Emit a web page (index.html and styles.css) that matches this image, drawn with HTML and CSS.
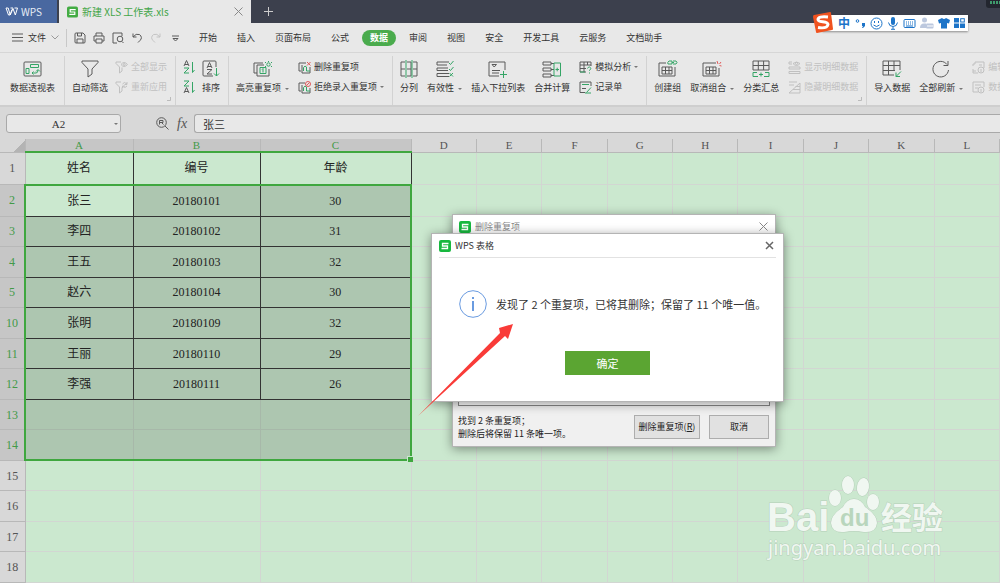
FILE: index.html
```
<!DOCTYPE html>
<html lang="zh-CN">
<head>
    <meta charset="UTF-8">
    <meta name="viewport" content="width=device-width, initial-scale=1.0">
    <title>新建 XLS 工作表.xls - WPS</title>
    <link rel="stylesheet" href="styles.css">
</head>
<body>

    <header class="tab-bar">
        <button class="wps-home">
            <svg width="13" height="10" viewBox="0 0 13 10"><path d="M1 1h2.200l2 7L8 1.500l2.300 6.500L12.500 1H9.500M1 1l2.500 7h1.500L7 2.500M5.500 1H8" /></svg>
            WPS
        </button>
        <div class="doc-tab">
            <svg class="s-logo" width="11" height="12" viewBox="0 0 12 12"><rect width="12" height="12" rx="2" /><path d="M9.500 3.500h-6v2.500h5v2.500h-6" /></svg>
            <span>新建 XLS 工作表.xls</span>
            <button class="close" aria-label="关闭"><svg width="9" height="9" viewBox="0 0 9 9"><path d="M.5.5l8 8M8.500.5l-8 8" /></svg></button>
        </div>
        <button class="new-tab" aria-label="新建"><svg width="9" height="9" viewBox="0 0 9 9"><path d="M4.500 0v9M0 4.500h9" /></svg></button>
        <svg class="gauge" width="14" height="8" viewBox="0 0 14 8"><path class="box" d="M0 0h14v8H3Q0 8 0 5z" /><path d="M4 1h2v3H4zM7 1h2v3H7zM10 1h2v3h-2zM13 1h1v3h-1z" /></svg>
    </header>

    <nav class="menu-bar">
        <button class="file-menu">
            <svg class="ic" width="11" height="9" viewBox="0 0 11 9"><path d="M0 1h11M0 4.500h11M0 8h11" /></svg>
            文件
            <svg class="ic pale" width="8" height="5" viewBox="0 0 8 5"><path d="M.5.5L4 4 7.500.5" /></svg>
        </button>
        <div class="quick">
            <button aria-label="保存"><svg class="ic" width="12" height="12" viewBox="0 0 12 12"><path d="M1 2q0-1 1-1h7l2 2v7q0 1-1 1H2q-1 0-1-1zM3.500 1v3h4V1M3 11V7h6v4" /></svg></button>
            <button aria-label="打印"><svg class="ic" width="12" height="12" viewBox="0 0 12 12"><path d="M3 4V1h6v3M3 9H1V4h10v5H9M3 7h6v4H3z" /></svg></button>
            <button aria-label="打印预览"><svg class="ic" width="12" height="12" viewBox="0 0 12 12"><path d="M5 11H1V1h9v3M10 9.500l1.500 1.500" /><circle cx="8" cy="7" r="2.800" /></svg></button>
            <button aria-label="撤销"><svg class="ic" width="12" height="12" viewBox="0 0 12 12"><path d="M2 1.500v3.500h3.500M2 5q3-4 6.500-2.500Q12 5.500 9 8.500L7 10.500" /></svg></button>
            <button aria-label="恢复"><svg class="ic faint" width="12" height="12" viewBox="0 0 12 12"><path d="M10 1.500v3.500H6.500M10 5Q7 1 3.500 2.500 0 5.500 3 8.500l2 2" /></svg></button>
            <button aria-label="更多"><svg class="ic" width="12" height="12" viewBox="0 0 12 12"><path d="M3 4h7M4 6.500h5L6.500 9z" /></svg></button>
        </div>
        <div class="menus">
            <button>开始</button>
            <button>插入</button>
            <button>页面布局</button>
            <button>公式</button>
            <button class="active">数据</button>
            <button>审阅</button>
            <button>视图</button>
            <button>安全</button>
            <button>开发工具</button>
            <button>云服务</button>
            <button>文档助手</button>
        </div>
    </nav>

    <div class="ribbon">
        <div class="group">
            <button class="tool">
                <svg class="ic" width="20" height="18" viewBox="0 0 20 18"><rect x="1" y="2" width="17" height="14" rx="1" /><path class="g" d="M7.500 4.500h8v3h-8zM3 8.500h3v5H3zM9 13h4q2 0 2-3M13 11.500l2-2 2 2M10.500 11.500L9 13l1.500 1.500" /></svg>
                <span>数据透视表</span>
            </button>
        </div>
        <div class="group filter">
            <button class="tool">
                <svg class="ic" width="20" height="18" viewBox="0 0 20 18"><path d="M2 1h16v1.500L12 9v5l-4 3V9L2 2.500z" /></svg>
                <span>自动筛选</span>
            </button>
            <div class="stack">
                <button class="mini" disabled><svg class="ic" width="13" height="13" viewBox="0 0 13 13"><path d="M6 1H1v1.500L4.500 6v6L7 10V6.500M6 3.500q3-4 6.500 0-3.500 4-6.500 0" /><circle cx="9.200" cy="3.500" r="1" /></svg>全部显示</button>
                <button class="mini" disabled><svg class="ic" width="13" height="13" viewBox="0 0 13 13"><path d="M6 1H1v1.500L4.500 6v6L7 10V6.500M12 1v2.500H9.500M12 3Q9 0 7.500 3M7.500 7V5H10M7.500 5.500q3 2 4.500-.5" /></svg>重新应用</button>
            </div>
            <svg class="launcher" width="4" height="4" viewBox="0 0 4 4"><path d="M3.500 0v3.500H0" /></svg>
        </div>
        <div class="group sort">
            <div class="stack">
                <button class="mini" aria-label="升序"><svg class="ic" width="12" height="14" viewBox="0 0 12 14"><path d="M1 6l2.500-5.500L6 6M2 4.500h3" /><path class="g" d="M1 8h5l-5 5h5M9.500 2v10.500L11.500 10" /></svg></button>
                <button class="mini" aria-label="降序"><svg class="ic" width="12" height="14" viewBox="0 0 12 14"><path d="M1 13l2.500-5.500L6 13M2 11.500h3" /><path class="g" d="M1 1h5L1 6h5M9.500 2v10.500L11.500 10" /></svg></button>
            </div>
            <button class="tool">
                <svg class="ic" width="18" height="18" viewBox="0 0 18 18"><path d="M11 16H2q-1 0-1-1V2q0-1 1-1h11q1 0 1 1v5M5 8l2.500-5.500L10 8M6 6.500h3M5 9.500h5L5 14h5" /><path class="g" d="M14.500 8v8M12 13.500l2.500 2.500 2.500-2.500" /></svg>
                <span>排序</span>
            </button>
        </div>
        <div class="group">
            <button class="tool">
                <svg class="ic" width="20" height="18" viewBox="0 0 20 18"><path d="M4 13H1V3h9M4 5h7M16 9v7H4V5" /><path class="g" d="M7 7.500h6v6H7zM10 8.500v4M9 9.500l1-1M15.500 1v1M12 2l1 1M19 2l-1 1M12 7l1-1M19 7l-1-1" /><circle class="g" cx="15.500" cy="4.500" r="1.700" /></svg>
                <span>高亮重复项<i class="arrow"></i></span>
            </button>
            <div class="stack">
                <button class="mini"><svg class="ic" width="13" height="13" viewBox="0 0 13 13"><path d="M8 2H1v8h2M12 6v6H4M4 4v8" /><path class="g" d="M5.500 10V6.500Q7 4 8.500 6v4H12" /><path class="r" d="M9 1l3.500 3.500M12.500 1L9 4.500" /></svg>删除重复项</button>
                <button class="mini"><svg class="ic" width="13" height="13" viewBox="0 0 13 13"><path d="M7 2H1v8h2M12 7v5H4M4 4v8" /><path class="g" d="M5.500 10V6.500Q7 4 8.500 6v4H12" /><circle class="r" cx="10" cy="3" r="2.500" /><path class="r" d="M8.500 4.500l3-3" /></svg>拒绝录入重复项<i class="arrow"></i></button>
            </div>
        </div>
        <div class="group">
            <button class="tool">
                <svg class="ic" width="18" height="18" viewBox="0 0 18 18"><path d="M5 2H1v14h4M7 2h4v14H7M13 2h4v14h-4M1 9h4M7 9h4M13 9h4" /><path class="g" d="M6 0v18M12 0v18" /></svg>
                <span>分列</span>
            </button>
            <button class="tool">
                <svg class="ic" width="18" height="18" viewBox="0 0 18 18"><path d="M13 2H1v3h10M12 8H1v2.500h11M13 13.500H1v3h12" /><path class="g" d="M13 3l1.500 1.500L17.500 1M13 9l1.500 1.500L17.500 7M13.500 13l3.500 3.500M17 13l-3.500 3.500" /></svg>
                <span>有效性<i class="arrow"></i></span>
            </button>
            <button class="tool">
                <svg class="ic" width="20" height="18" viewBox="0 0 20 18"><path d="M17 10V2H1v14h10M4 10.500h8M4 13h7M4 4.500h4.500L6.200 7z" /><path class="g" d="M15.500 11v7M12 14.500h7" /></svg>
                <span>插入下拉列表</span>
            </button>
            <button class="tool">
                <svg class="ic" width="20" height="18" viewBox="0 0 20 18"><path d="M1 2h8v3H1zM1 8h8v3H1zM1 14h8v3H1zM9 3.500h3M9 9.500h3M9 15.500h3" /><path class="g" d="M12 3h6.500v13H12zM13.500 9.500h3.500M15.200 7.700v3.600" /></svg>
                <span>合并计算</span>
            </button>
            <div class="stack">
                <button class="mini"><svg class="ic" width="13" height="13" viewBox="0 0 13 13"><path d="M7 11H1V1h11v4M1 4h11M1 7.500h6M5 1v10M8.500 1v3" /><path class="g" d="M8.500 7.500Q9 6 10.500 6q3 1 0 3.500v.5M10.500 11.500v1M1 11h5" /></svg>模拟分析<i class="arrow"></i></button>
                <button class="mini"><svg class="ic" width="13" height="13" viewBox="0 0 13 13"><path d="M6 11.500H1V1h11v4M3 7.500h4" /><path class="g" d="M3 3.500h7M7.500 11.500l4.500-5M6 12h6" /></svg>记录单</button>
            </div>
        </div>
        <div class="group">
            <button class="tool">
                <svg class="ic" width="20" height="18" viewBox="0 0 20 18"><path d="M8 3H1v13h16V7M4 7h10v7H4zM4 10.500h10M7.500 7v7M11 7v7" /><path class="g" d="M11 1h3v3h-4q-1-1.500 1-3M14 2.500h2M15 1h3q2 1.500 0 3h-3" /></svg>
                <span>创建组</span>
            </button>
            <button class="tool">
                <svg class="ic" width="20" height="18" viewBox="0 0 20 18"><path d="M14 3H1v13h16V8M4 7h10v7H4zM4 10.500h10M7.500 7v7M11 7v7" /><path class="r" d="M15 1l1 3M19 2l-1.500 2M17.500 5.500l2 .5" /></svg>
                <span>取消组合<i class="arrow"></i></span>
            </button>
            <button class="tool">
                <svg class="ic" width="20" height="18" viewBox="0 0 20 18"><path d="M2 1h16v9H2zM2 5.500h16M7.300 1v9M12.600 1v9" /><path class="g" d="M6 12.500H2v4h5M14 12.500h4v4h-5M8 14.500h4M10 12.500v4" /></svg>
                <span>分类汇总</span>
            </button>
            <div class="stack">
                <button class="mini" disabled><svg class="ic" width="13" height="13" viewBox="0 0 13 13"><path d="M4 1H1v2h3M1 6h11v2H1zM1 10.500h11v2H1zM5 2.500q3.500-3 7 0-3.500 4-7 0" /><circle cx="8.500" cy="2.500" r="1" /></svg>显示明细数据</button>
                <button class="mini" disabled><svg class="ic" width="13" height="13" viewBox="0 0 13 13"><path d="M1 1h8M1 4h5M1 12h11V2zM12 5.500H7.500M12 8.500H5" /></svg>隐藏明细数据</button>
            </div>
            <svg class="launcher" width="4" height="4" viewBox="0 0 4 4"><path d="M3.500 0v3.500H0" /></svg>
        </div>
        <div class="group">
            <button class="tool">
                <svg class="ic" width="20" height="18" viewBox="0 0 20 18"><path d="M12 15H1V1h17v9M1 5.500h17M1 10.500h12M6.500 1v14M12 1v9" /><path class="g" d="M19 11.500l-5 5M14 12.500v4h4" /></svg>
                <span>导入数据</span>
            </button>
            <button class="tool">
                <svg class="ic" width="20" height="18" viewBox="0 0 20 18"><path d="M17.500 10A7.800 7.800 0 1 1 16 4.500M17 1v4.500h-4.500" /></svg>
                <span>全部刷新<i class="arrow"></i></span>
            </button>
            <div class="stack">
                <button class="mini" disabled><svg class="ic" width="13" height="13" viewBox="0 0 13 13"><path d="M1 5V3h2V1h9v6M1 8v4h5M1 10h3" /><circle cx="9" cy="9" r="3" /><path d="M9 8v3M7 4h3" /></svg>编辑连接</button>
                <button class="mini" disabled><svg class="ic" width="13" height="13" viewBox="0 0 13 13"><path d="M6 11H1V1h11v5M3 4h6M3 7h3" /><circle cx="9" cy="9" r="3" /><path d="M9 8v3" /></svg>数据区域</button>
            </div>
        </div>
    </div>

    <div class="formula-bar">
        <div class="name-box">
            <input type="text" value="A2" aria-label="名称框">
            <i class="arrow"></i>
        </div>
        <svg class="ic" width="13" height="13" viewBox="0 0 13 13"><circle cx="5.500" cy="5.500" r="4.800" /><path d="M3.500 7.500v-4H7v2H3.500M5.500 5.500l2 2M9 9l3.500 3.500" /></svg>
        <span class="fx">fx</span>
        <input class="formula" type="text" value="张三" aria-label="编辑栏">
    </div>

    <main class="sheet">
        <table>
            <colgroup>
                <col class="col-num"><col class="col-a"><col class="col-b"><col class="col-c">
                <col><col><col><col><col><col><col><col><col>
            </colgroup>
            <thead>
                <tr>
                    <th class="corner"></th>
                    <th class="on">A</th><th class="on">B</th><th class="on">C</th>
                    <th>D</th><th>E</th><th>F</th><th>G</th><th>H</th><th>I</th><th>J</th><th>K</th><th>L</th>
                </tr>
            </thead>
            <tbody id="rows"></tbody>
        </table>
    </main>

    <section class="dialog remove-dialog">
        <div class="dialog-title">
            <svg class="s-logo" width="12" height="12" viewBox="0 0 12 12"><rect width="12" height="12" rx="2" /><path d="M9.500 3.500h-6v2.500h5v2.500h-6" /></svg>
            <span>删除重复项</span>
            <button class="close" aria-label="关闭"><svg width="9" height="9" viewBox="0 0 9 9"><path d="M.5.5l8 8M8.500.5l-8 8" /></svg></button>
        </div>
        <div class="column-list"></div>
        <div class="dialog-footer">
            <p>找到 2 条重复项；<br>删除后将保留 11 条唯一项。</p>
            <button>删除重复项(<u>R</u>)</button>
            <button>取消</button>
        </div>
    </section>

    <section class="dialog message-dialog">
        <div class="dialog-title">
            <svg class="s-logo" width="12" height="12" viewBox="0 0 12 12"><rect width="12" height="12" rx="2" /><path d="M9.500 3.500h-6v2.500h5v2.500h-6" /></svg>
            <span>WPS 表格</span>
            <button class="close" aria-label="关闭"><svg width="9" height="9" viewBox="0 0 9 9"><path d="M1 1l7 7M8 1L1 8" /></svg></button>
        </div>
        <div class="message">
            <svg class="info" width="28" height="28" viewBox="0 0 28 28"><circle cx="14" cy="14" r="13.300" /><path d="M14 7v2M14 11v10" /></svg>
            <p>发现了 2 个重复项，已将其删除；保留了 11 个唯一值。</p>
        </div>
        <button class="ok">确定</button>
    </section>

    <svg class="pointer" width="96" height="94" viewBox="0 0 96 94"><path d="M0 92L82 9 81 4 95 0 90 15 87 12z" /></svg>

    <div class="ime">
        <svg class="sogou" width="22" height="22" viewBox="0 0 22 22"><path class="tile" d="M2 3L18 0q1 0 1 1l2 16q0 1-1 1L5 21q-1 0-1-1L1 5q0-2 1-2z" /><path class="curve" d="M16 5Q6 4 6 7.500c0 3.500 10 1 10 5Q15 17 6 15.500" /></svg>
        <span>中</span>
        <svg width="12" height="12" viewBox="0 0 12 12"><circle class="line" cx="3.500" cy="4" r="1.300" /><path d="M8 6h3v3l-2 2H8l1-2H8z" /></svg>
        <svg width="13" height="13" viewBox="0 0 13 13"><circle class="line" cx="6.500" cy="6.500" r="5.500" /><path class="line" d="M4.500 4v2M8.500 4v2M3.500 8q3 3 6 0" /></svg>
        <svg width="12" height="13" viewBox="0 0 12 13"><rect x="4" y="0" width="4" height="8" rx="2" /><path class="line" d="M1.500 5.500Q2 9.500 6 9.500t4.500-4M6 10v2M4 12.300h4" /></svg>
        <svg width="13" height="11" viewBox="0 0 13 11"><rect class="line" x="1" y="1.500" width="11" height="8" rx="1" /><path class="line" d="M3 4h1M5 4h1M7 4h1M9 4h1M3 6h1M5 6h1M7 6h1M9 6h1M3 8h7" /></svg>
        <svg class="muted" width="14" height="13" viewBox="0 0 14 13"><circle cx="4.500" cy="3" r="2.500" /><path d="M0 11q0-4.500 4-4.500h2V11z" /><rect x="6" y="6.500" width="7.500" height="5" rx="1" /><path class="gap" d="M8 8v2M10 8v2M12 8v2" /></svg>
        <svg width="12" height="12" viewBox="0 0 12 12"><path d="M4 1q2 2 4 0l4 2-1 3.500-2-.5v5.500H3V6l-2 .5L0 3z" /></svg>
        <svg width="11" height="12" viewBox="0 0 11 12"><path d="M0 1h5v4.500H0zM0 6.500h5V11H0zM6 6.500h5V11H6z" /><rect class="line" x="6.700" y="1.700" width="3.600" height="3.300" /></svg>
    </div>

    <svg class="watermark" width="190" height="100" viewBox="0 0 190 100">
        <text class="bai" x="7" y="61">Bai</text>
        <ellipse cx="75" cy="28" rx="6" ry="8" />
        <ellipse cx="88" cy="15" rx="6" ry="9" />
        <ellipse cx="103" cy="17" rx="6" ry="9" transform="rotate(8 103 17)" />
        <ellipse cx="113" cy="32" rx="6" ry="8" />
        <path d="M94 29q7 0 11 8 12 8 12 16-1 10-13 9-10-2-20 0-12 1-13-9 0-8 12-16 4-8 11-8z" />
        <text class="du" x="80" y="56">du</text>
        <text class="jy" x="121" y="59">经验</text>
        <text class="url" x="8" y="85">jingyan.baidu.com</text>
    </svg>

    <script>
        const data = {
            1: ['姓名', '编号', '年龄'],
            2: ['张三', '20180101', '30'],
            3: ['李四', '20180102', '31'],
            4: ['王五', '20180103', '32'],
            5: ['赵六', '20180104', '30'],
            10: ['张明', '20180109', '32'],
            11: ['王丽', '20180110', '29'],
            12: ['李强', '20180111', '26']
        };
        // Rows 6-9 are hidden by the filter
        const visible = [1, 2, 3, 4, 5, 10, 11, 12, 13, 14, 15, 16, 17, 18];
        const tbody = document.getElementById('rows');

        visible.forEach(num => {
            const row = document.createElement('tr');
            const values = data[num] || ['', '', ''];
            const selected = num >= 2 && num <= 14;

            if (data[num]) row.classList.add('filled');
            if (selected) row.classList.add('selected');
            if (num === 1) row.classList.add('first');
            if (num === 2) row.classList.add('top');
            if (num === 14) row.classList.add('bottom');

            row.innerHTML = `<th>${num}</th>`
                + values.map(value => `<td class="cell">${value}</td>`).join('')
                + '<td></td>'.repeat(9);
            tbody.appendChild(row);
        });
    </script>

</body>
</html>
```

FILE: styles.css
```
* {
    box-sizing: border-box;
}
body {
    margin: 0;
    height: 100vh;
    display: flex;
    flex-direction: column;
    position: relative;
    overflow: hidden;
    background-color: #d8d8d8;
    color: #333;
    font-family: "Noto Sans CJK SC", sans-serif;
    font-size: 9px;
    line-height: 12px;
}
button {
    margin: 0;
    padding: 0;
    border: 0;
    background: none;
    color: inherit;
    font: inherit;
    white-space: nowrap;
    cursor: pointer;
}
input {
    font: inherit;
    color: inherit;
    outline: none;
}
svg {
    display: block;
    flex: none;
    fill: none;
}
p {
    margin: 0;
}

/* Icons */
.ic {
    stroke: #5a5a5a;
}
.ic .g {
    stroke: #35a566;
}
.ic .r {
    stroke: #e05a5a;
}
.ic.pale {
    stroke: #999;
}
.ic.faint {
    stroke: #c4c4c4;
}
.arrow {
    border: 2px solid transparent;
    border-top-color: #777;
    border-bottom: 0;
    display: inline-block;
    margin-left: 4px;
    vertical-align: middle;
}
.s-logo rect {
    fill: #18b83f;
}
.s-logo path {
    stroke: #fff;
    stroke-width: 1.3;
}
.close {
    margin-left: auto;
}
.close svg {
    stroke: #888;
}

/* Title tabs */
.tab-bar {
    display: flex;
    height: 23px;
    background-color: #3c404d;
}
.wps-home {
    display: flex;
    align-items: center;
    gap: 3px;
    width: 57px;
    padding-left: 5px;
    margin-right: 2px;
    background-color: #4968a0;
    color: #e6ecf5;
    font-size: 10px;
}
.wps-home svg {
    stroke: #fff;
}
.doc-tab {
    display: flex;
    align-items: center;
    gap: 4px;
    width: 192px;
    padding: 0 8px;
    background-color: #e8e8e8;
    color: #43a547;
    font-size: 10px;
}
.doc-tab .s-logo rect {
    fill: #43ac43;
}
.new-tab {
    padding: 0 13px;
}
.new-tab svg {
    stroke: #ccc;
}
.gauge {
    margin-left: auto;
    fill: #3f9a6c;
}
.gauge .box {
    fill: #23262f;
}

/* Menu */
.menu-bar {
    display: flex;
    align-items: center;
    height: 30px;
    background-color: #e8e8e8;
    border-bottom: 1px solid #d6d6d6;
}
.file-menu {
    display: flex;
    align-items: center;
    gap: 5px;
    height: 18px;
    padding: 0 7px 0 12px;
    border-right: 1px solid #c8c8c8;
}
.quick {
    display: flex;
    gap: 7px;
    padding: 0 18px 0 7px;
}
.menus {
    display: flex;
    align-items: center;
    gap: 20px;
}
.menus .active {
    height: 16px;
    padding: 0 8px;
    margin: 0 -7px;
    border-radius: 8px;
    background-color: #4aab4d;
    color: #fff;
    font-weight: bold;
}

/* Ribbon */
.ribbon {
    display: flex;
    height: 52px;
    padding-top: 3px;
    background-color: #e8e8e8;
    overflow: hidden;
}
.group {
    position: relative;
    display: flex;
    flex: none;
    align-items: flex-start;
    gap: 9px;
    padding: 4px 8px 0 7px;
    border-right: 1px solid #d2d2d2;
}
.group:first-child {
    padding: 4px 9px 0 10px;
}
.group:last-child {
    border-right: 0;
}
.group.filter,
.group.sort {
    gap: 7px;
}
.tool {
    display: flex;
    flex-direction: column;
    align-items: center;
    gap: 4px;
}
.stack {
    display: flex;
    flex-direction: column;
    gap: 6px;
}
.mini {
    display: flex;
    align-items: center;
    gap: 3px;
    height: 14px;
}
.mini .arrow {
    margin-left: 0;
}
.mini:disabled {
    color: #c0c0c0;
}
.mini:disabled .ic {
    stroke: #c0c0c0;
}
.launcher {
    position: absolute;
    right: 4px;
    bottom: 4px;
    stroke: #bbb;
}

/* Formula bar */
.formula-bar {
    display: flex;
    align-items: center;
    height: 34px;
    padding: 1px 0 0 6px;
    background-color: #d8d8d8;
    border-top: 2px solid #cecece;
}
.name-box {
    display: flex;
    align-items: center;
    width: 115px;
    height: 19px;
    margin-right: 35px;
    padding-right: 2px;
    border: 1px solid #a9a9a9;
    border-radius: 3px;
    background-color: #e8e8e8;
}
.name-box input {
    flex: 1;
    min-width: 0;
    padding: 0;
    border: 0;
    background: none;
    text-align: center;
    font-family: "Liberation Serif", serif;
    font-size: 11px;
}
.fx {
    padding: 0 7px 0 8px;
    font: italic 14px/16px "Liberation Serif", serif;
    color: #555;
}
.formula {
    flex: 1;
    height: 19px;
    padding: 0 8px;
    border: 1px solid #a9a9a9;
    border-right: 0;
    border-radius: 3px 0 0 3px;
    background-color: #e8e8e8;
    font-size: 11px;
}

/* Sheet */
.sheet {
    flex: 1;
    min-height: 0;
}
table {
    width: 100%;
    height: 100%;
    table-layout: fixed;
    border-collapse: collapse;
    background-color: #cbe8cf;
    font-family: "Liberation Serif", "Noto Sans CJK SC", serif;
    font-size: 12px;
    line-height: 14px;
    text-align: center;
}
th, td {
    padding: 0;
    border: 1px solid #d2d6d2;
}
th {
    background-color: #d8d8d8;
    border-color: #b8b8b8;
    color: #555;
    font-weight: normal;
}
thead th {
    height: 13px;
    border-top: 0;
    font-size: 11px;
    line-height: 12px;
}
.col-num {
    width: 25px;
}
.col-a {
    width: 108px;
}
.col-b {
    width: 127px;
}
.col-c {
    width: 151px;
}
.corner {
    border-left: 0;
    background: linear-gradient(135deg, #d8d8d8 70%, #b4b4b4 70%);
}
tbody th {
    border-left: 0;
}
th.on,
.selected th {
    background-color: #c6c6c6;
    color: #439a48;
}
.filled .cell {
    border: 1px solid #333;
    color: #222;
}
.selected .cell {
    background-color: #adc6b0;
}
.selected:not(.filled) .cell {
    border-color: #a7b8a9;
}
.first .cell {
    border-top: 2px solid #3fa73f;
}
.top .cell {
    border-top: 2px solid #3fa73f;
}
.top .cell:nth-child(2) {
    background-color: #cbe8cf;
}
.selected .cell:nth-child(2) {
    border-left: 2px solid #3fa73f;
}
.selected .cell:nth-child(4) {
    border-right: 2px solid #3fa73f;
}
.selected.bottom .cell.cell {
    border-bottom: 2px solid #3fa73f;
}
.bottom .cell:nth-child(4) {
    position: relative;
}
/* fill handle */
.bottom .cell:nth-child(4)::after {
    content: "";
    position: absolute;
    right: -3px;
    bottom: -3px;
    width: 5px;
    height: 5px;
    border: 1px solid #cbe8cf;
    border-width: 1px 0 0 1px;
    background-color: #3fa73f;
}

/* Dialogs */
.dialog {
    position: absolute;
    display: flex;
    flex-direction: column;
    border: 1px solid #b4b4b4;
    box-shadow: 0 2px 10px rgba(0, 0, 0, 0.4);
}
.dialog-title {
    display: flex;
    align-items: center;
    gap: 4px;
    height: 23px;
}
.remove-dialog {
    left: 452px;
    top: 214px;
    width: 324px;
    background-color: #f0f0f0;
    color: #222;
}
.remove-dialog .dialog-title {
    padding: 0 7px 0 6px;
    background-color: #fff;
    color: #888;
}
.column-list {
    height: 168px;
    margin: 0 5px;
    border: 1px solid #888;
    background-color: #fff;
}
.dialog-footer {
    display: flex;
    align-items: center;
    gap: 9px;
    padding: 8px 6px 6px 5px;
}
.dialog-footer p {
    flex: 1;
    line-height: 13px;
}
.dialog-footer button {
    width: 60px;
    height: 24px;
    border: 1px solid #adadad;
    background-color: #e1e1e1;
}
.dialog-footer button:nth-child(2) {
    width: 66px;
}
.message-dialog {
    left: 431px;
    top: 233px;
    width: 353px;
    padding: 0 7px 26px;
    background-color: #fff;
}
.message-dialog .dialog-title {
    height: 24px;
    padding-right: 2px;
    border-bottom: 1px solid #e2e2e2;
}
.message-dialog .close svg {
    stroke: #666;
    stroke-width: 1.5;
}
.message {
    display: flex;
    align-items: center;
    gap: 9px;
    padding: 32px 20px 33px;
    font-size: 11px;
    line-height: 16px;
    white-space: nowrap;
}
.info {
    stroke: #6a9be0;
}
.info path {
    stroke-width: 2;
}
.ok {
    align-self: center;
    width: 85px;
    height: 24px;
    background-color: #5ba532;
    color: #fff;
    font-size: 11px;
}

/* Red arrow pointing at the message */
.pointer {
    position: absolute;
    left: 418px;
    top: 324px;
    fill: #f93b38;
}

/* Input method toolbar */
.ime {
    position: absolute;
    top: 15px;
    right: 32px;
    display: flex;
    align-items: center;
    gap: 4px;
    height: 16px;
    padding-right: 3px;
    background-color: #fff;
    color: #1d74c8;
    font-size: 12px;
    font-weight: bold;
    box-shadow: 0 1px 2px rgba(0, 0, 0, 0.4);
}
.ime svg {
    fill: #1d74c8;
}
.ime .line {
    fill: none;
    stroke: #1d74c8;
}
.ime .muted {
    fill: #bcc8de;
}
.ime .gap {
    stroke: #fff;
}
.ime .sogou {
    margin-left: -10px;
}
.ime .tile {
    fill: #f0521f;
}
.ime .curve {
    fill: none;
    stroke: #fff;
    stroke-width: 3;
}

/* Watermark */
.watermark {
    position: absolute;
    right: 50px;
    bottom: 13px;
    fill: #f0f7f1;
    stroke: #b5cfb9;
    stroke-width: 1;
    paint-order: stroke;
}
.bai {
    font: bold 40px "Liberation Sans", sans-serif;
}
.du {
    fill: #b9d6bd;
    stroke: none;
    font: bold 24px "Liberation Sans", sans-serif;
}
.jy {
    font: bold 31px "Noto Sans CJK SC", sans-serif;
}
.url {
    font: 20px "Noto Sans", sans-serif;
}
```
